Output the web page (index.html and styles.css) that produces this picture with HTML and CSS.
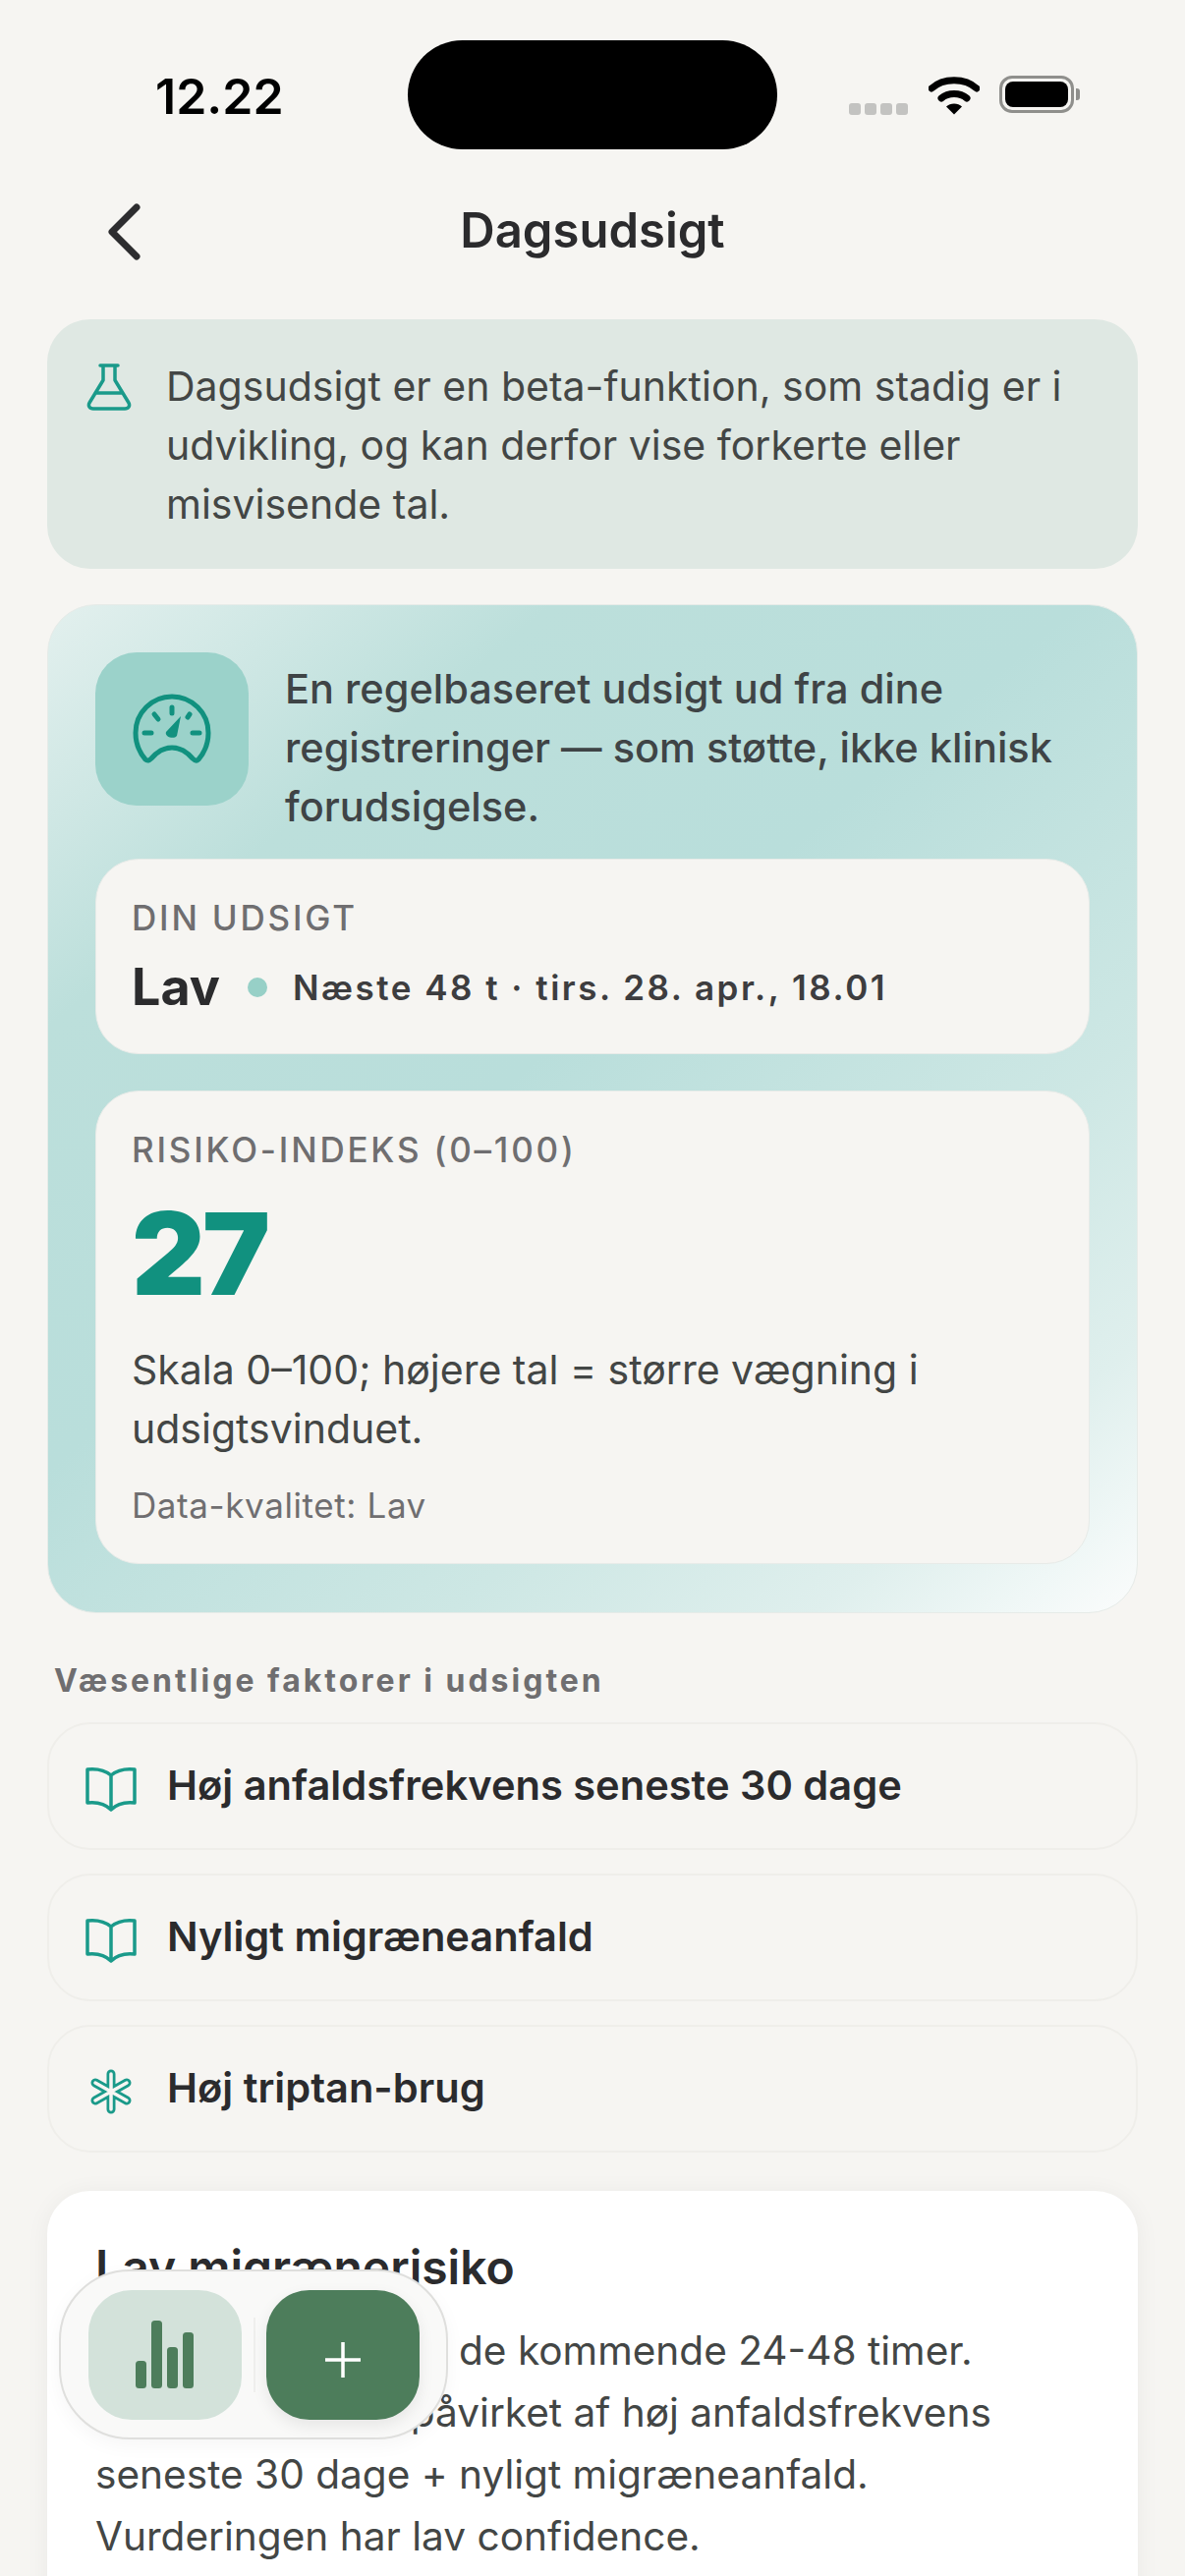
FILE: index.html
```html
<!DOCTYPE html>
<html lang="da">
<head>
<meta charset="UTF-8">
<meta name="viewport" content="width=device-width, initial-scale=1.0">
<title>Dagsudsigt</title>
<link rel="stylesheet" href="styles.css">
</head>
<body>

<div class="screen">
    <div class="status-bar">
        <span class="time">12.22</span>
        <div class="island"></div>
        <div class="status-icons">
            <div class="signal"><i></i><i></i><i></i><i></i></div>
            <svg class="wifi" width="52" height="40" viewBox="0 0 52 40">
                <path d="M3 13C15 2 37 2 49 13" fill="none" stroke="#000" stroke-width="7" stroke-linecap="round"/>
                <path d="M13 23C20 17 32 17 39 23" fill="none" stroke="#000" stroke-width="7" stroke-linecap="round"/>
                <path d="M18 31.500C22 27.500 30 27.500 34 31.500L26 39.500Z" fill="#000"/>
            </svg>
            <div class="battery"><div class="battery-fill"></div></div>
        </div>
    </div>

    <header class="top-bar">
        <svg class="back" width="36" height="58" viewBox="0 0 36 58">
            <path d="M31 4L6 29L31 54" fill="none" stroke="#2d2d2f" stroke-width="7" stroke-linecap="round" stroke-linejoin="round"/>
        </svg>
        <h1>Dagsudsigt</h1>
    </header>

    <main class="content">
        <section class="beta-note">
            <svg class="row-icon" width="46" height="48" viewBox="0 0 46 48">
                <path d="M14 2H32M17 2V17L3 40C1.500 43 3 46 7 46H39C43 46 44.500 43 43 40L29 17V2M9 30H37" fill="none" stroke="#1a9a8a" stroke-width="3.500" stroke-linecap="round" stroke-linejoin="round"/>
            </svg>
            <p>Dagsudsigt er en beta-funktion, som stadig er i udvikling, og kan derfor vise forkerte eller misvisende tal.</p>
        </section>

        <section class="outlook">
            <div class="outlook-intro">
                <div class="gauge-box">
                    <svg width="80" height="80" viewBox="0 0 80 80">
                        <path d="M13 71C7 64 3 54 3 44A37 37 0 0 1 77 44C77 54 73 64 67 71C65 73 63 72 61 70C55 63 48 59 40 59C32 59 25 63 19 70C17 72 15 73 13 71Z" fill="none" stroke="#11917f" stroke-width="5" stroke-linejoin="round"/>
                        <path d="M40 18V24M22 25L26 30M58 25L56 28M12 44H19M61 44H68" stroke="#11917f" stroke-width="5" stroke-linecap="round"/>
                        <path d="M34 43L49 27L45 47C42 51 32 48 34 43Z" fill="#11917f"/>
                    </svg>
                </div>
                <p>En regelbaseret udsigt ud fra dine registreringer — som støtte, ikke klinisk forudsigelse.</p>
            </div>

            <div class="panel">
                <div class="panel-label">DIN UDSIGT</div>
                <div class="level-row">
                    <span class="level">Lav</span>
                    <span class="level-dot"></span>
                    <span class="level-window">Næste 48 t · tirs. 28. apr., 18.01</span>
                </div>
            </div>

            <div class="panel panel-risk">
                <div class="panel-label">RISIKO-INDEKS (0–100)</div>
                <div class="score">27</div>
                <p class="score-text">Skala 0–100; højere tal = større vægning i udsigtsvinduet.</p>
                <div class="data-quality">Data-kvalitet: Lav</div>
            </div>
        </section>

        <h2 class="factors-title">Væsentlige faktorer i udsigten</h2>
        <ul class="factors">
            <li class="factor">
                <svg class="row-icon" width="52" height="46" viewBox="0 0 52 46">
                    <path d="M26 9C20 4 11 2 2 3V37C11 36 20 38 26 44C32 38 41 36 50 37V3C41 2 32 4 26 9ZM26 9V44" fill="none" stroke="#1a9a8a" stroke-width="3.500" stroke-linejoin="round"/>
                </svg>
                Høj anfaldsfrekvens seneste 30 dage
            </li>
            <li class="factor">
                <svg class="row-icon" width="52" height="46" viewBox="0 0 52 46">
                    <path d="M26 9C20 4 11 2 2 3V37C11 36 20 38 26 44C32 38 41 36 50 37V3C41 2 32 4 26 9ZM26 9V44" fill="none" stroke="#1a9a8a" stroke-width="3.500" stroke-linejoin="round"/>
                </svg>
                Nyligt migræneanfald
            </li>
            <li class="factor">
                <svg class="row-icon" width="52" height="46" viewBox="0 0 52 46">
                    <g fill="none" stroke-linecap="round">
                        <path d="M26 5V41M10 14L42 32M42 14L10 32" stroke="#1a9a8a" stroke-width="9"/>
                        <path d="M26 5V41M10 14L42 32M42 14L10 32" stroke="#f6f5f2" stroke-width="3.500"/>
                    </g>
                </svg>
                Høj triptan-brug
            </li>
        </ul>

        <section class="summary">
            <h3>Lav migrænerisiko</h3>
            <p>Din risiko er lav for de kommende 24-48 timer. Vurderingen var påvirket af høj anfaldsfrekvens seneste 30 dage + nyligt migræneanfald. Vurderingen har lav confidence.</p>
        </section>
    </main>

    <nav class="float-bar">
        <button class="float-btn float-btn-stats">
            <svg width="60" height="70" viewBox="0 0 60 70">
                <rect x="0" y="41" width="11" height="28" rx="3.500" fill="#4d7d5b"/>
                <rect x="16" y="0" width="11" height="69" rx="3.500" fill="#4d7d5b"/>
                <rect x="32" y="27" width="11" height="42" rx="3.500" fill="#4d7d5b"/>
                <rect x="48" y="12" width="11" height="57" rx="3.500" fill="#4d7d5b"/>
            </svg>
        </button>
        <span class="float-divider"></span>
        <button class="float-btn float-btn-add">
            <svg class="plus" width="38" height="38" viewBox="0 0 38 38">
                <path d="M19 1V37M1 19H37" stroke="#fff" stroke-width="3.500"/>
            </svg>
        </button>
    </nav>
</div>

</body>
</html>
```

FILE: styles.css
```css
* {
    box-sizing: border-box;
}

body {
    margin: 0;
    padding: 0;
    background: #f6f5f2;
    font-family: Inter, "Noto Sans", sans-serif;
    color: #2b2b2d;
}

.screen {
    position: relative;
    height: 2622px;
    overflow: hidden;
}

.status-bar {
    height: 152px;
    padding: 41px 0 0 0;
    display: flex;
    position: relative;
}

.time {
    position: absolute;
    left: 158px;
    top: 68px;
    font-size: 50px;
    line-height: 60px;
    font-weight: 600;
    color: #000;
}

.island {
    width: 376px;
    height: 111px;
    margin-left: 415px;
    background: #000;
    border-radius: 56px;
}

.status-icons {
    margin-left: 73px;
    padding-top: 36px;
    display: flex;
    align-items: flex-start;
}

.signal {
    display: flex;
    gap: 4px;
    margin-top: 28px;
    margin-right: 21px;
}

.signal i {
    width: 12px;
    height: 12px;
    border-radius: 3px;
    background: #c3c3c1;
}

.battery {
    position: relative;
    width: 76px;
    height: 38px;
    margin-left: 20px;
    border: 3px solid #8f8f8c;
    border-radius: 13px;
    padding: 3px;
}

.battery::after {
    content: "";
    position: absolute;
    right: -9px;
    top: 10px;
    width: 4px;
    height: 12px;
    background: #8f8f8c;
    border-radius: 0 3px 3px 0;
}

.battery-fill {
    height: 100%;
    background: #000;
    border-radius: 8px;
}

.top-bar {
    height: 173px;
    display: flex;
    align-items: center;
    justify-content: center;
    position: relative;
    padding-bottom: 8px;
}

.top-bar h1 {
    margin: 0;
    font-size: 49px;
    font-weight: 600;
}

.back {
    position: absolute;
    left: 108px;
    top: 55px;
}

.content {
    padding: 0 48px;
}

.beta-note {
    display: flex;
    gap: 35px;
    padding: 38px 20px 38px 40px;
    height: 254px;
    background: #dfe8e3;
    border-radius: 44px;
    font-size: 41px;
    line-height: 60px;
    color: #434645;
}

.beta-note p {
    margin: 0;
}

.row-icon {
    flex: none;
    margin-top: 7px;
}

.outlook {
    margin-top: 36px;
    height: 1027px;
    padding: 48px 48px 0 48px;
    border-radius: 50px;
    border: 1px solid #e6ebe8;
    background: linear-gradient(140deg, #e3f0ee 0%, #bcdfdb 22%, #b9dedb 45%, #cde7e4 70%, #dfefed 86%, #eff7f6 94%, #fbfcfc 100%);
}

.outlook-intro {
    display: flex;
    gap: 37px;
    height: 210px;
}

.outlook-intro p {
    margin: 7px 0 0 0;
    font-size: 41.500px;
    line-height: 60px;
    font-weight: 500;
    color: #3f4446;
}

.gauge-box {
    flex: none;
    width: 156px;
    height: 156px;
    display: flex;
    align-items: center;
    justify-content: center;
    border-radius: 42px;
    background: #9bd2ca;
}

.panel {
    height: 199px;
    padding: 37px 36px 0 36px;
    background: #f6f5f2;
    border: 1px solid #e7ebe8;
    border-radius: 44px;
}

.panel-label {
    font-size: 35px;
    line-height: 44px;
    font-weight: 500;
    letter-spacing: 2.800px;
    color: #6f6e70;
}

.level-row {
    display: flex;
    align-items: center;
    margin-top: 15px;
}

.level {
    font-size: 52px;
    line-height: 68px;
    font-weight: 700;
}

.level-dot {
    width: 20px;
    height: 20px;
    margin: 0 26px 0 28px;
    border-radius: 50%;
    background: #97d0c7;
}

.level-window {
    font-size: 35px;
    font-weight: 600;
    letter-spacing: 2.500px;
    color: #3d3d3f;
}

.panel-risk {
    height: 482px;
    margin-top: 37px;
}

.score {
    font-size: 116px;
    line-height: 130px;
    font-weight: 900;
    letter-spacing: -3px;
    color: #11917f;
    margin-top: 19px;
}

.score-text {
    margin: 23px 0 0 0;
    font-size: 41px;
    line-height: 60px;
    color: #434645;
}

.data-quality {
    margin-top: 26px;
    font-size: 35px;
    line-height: 44px;
    letter-spacing: 0.600px;
    color: #6f6e70;
}

.factors-title {
    margin: 49px 0 0 7px;
    font-size: 32px;
    line-height: 40px;
    font-weight: 700;
    letter-spacing: 3px;
    color: #6f6e70;
}

.factors {
    list-style-type: none;
    margin: 22px 0 0 0;
    padding: 0;
}

.factor {
    display: flex;
    align-items: center;
    gap: 31px;
    height: 130px;
    margin-bottom: 24px;
    padding-left: 37px;
    padding-bottom: 2px;
    border: 2px solid #efeeea;
    border-radius: 44px;
    font-size: 41.600px;
    font-weight: 600;
}

.summary {
    margin-top: 39px;
    height: 500px;
    padding: 50px 49px;
    background: #fff;
    border-radius: 44px;
    box-shadow: 0 2px 24px rgba(0, 0, 0, 0.05);
}

.summary h3 {
    margin: 0;
    font-size: 48px;
    line-height: 56px;
    font-weight: 600;
}

.summary p {
    margin: 25px 0 0 0;
    font-size: 40.600px;
    line-height: 63px;
    color: #434645;
}

.float-bar {
    position: absolute;
    left: 60px;
    top: 2310px;
    width: 396px;
    height: 173px;
    display: flex;
    align-items: center;
    padding: 0 0 0 28px;
    background: #f9f9f8;
    border: 2px solid #dfdfdd;
    border-radius: 72px;
    box-shadow: 0 6px 20px rgba(0, 0, 0, 0.04);
}

.float-btn {
    width: 156px;
    height: 132px;
    padding: 0;
    border: none;
    border-radius: 44px;
    display: flex;
    align-items: center;
    justify-content: center;
}

.float-btn-stats {
    background: #d3e2da;
}

.float-btn-add {
    background: #4d7d5b;
    box-shadow: 0 6px 16px rgba(0, 0, 0, 0.08);
}

.plus {
    margin-top: 10px;
}

.float-divider {
    width: 2px;
    height: 76px;
    margin: 0 11.500px;
    background: #efefed;
}
```
